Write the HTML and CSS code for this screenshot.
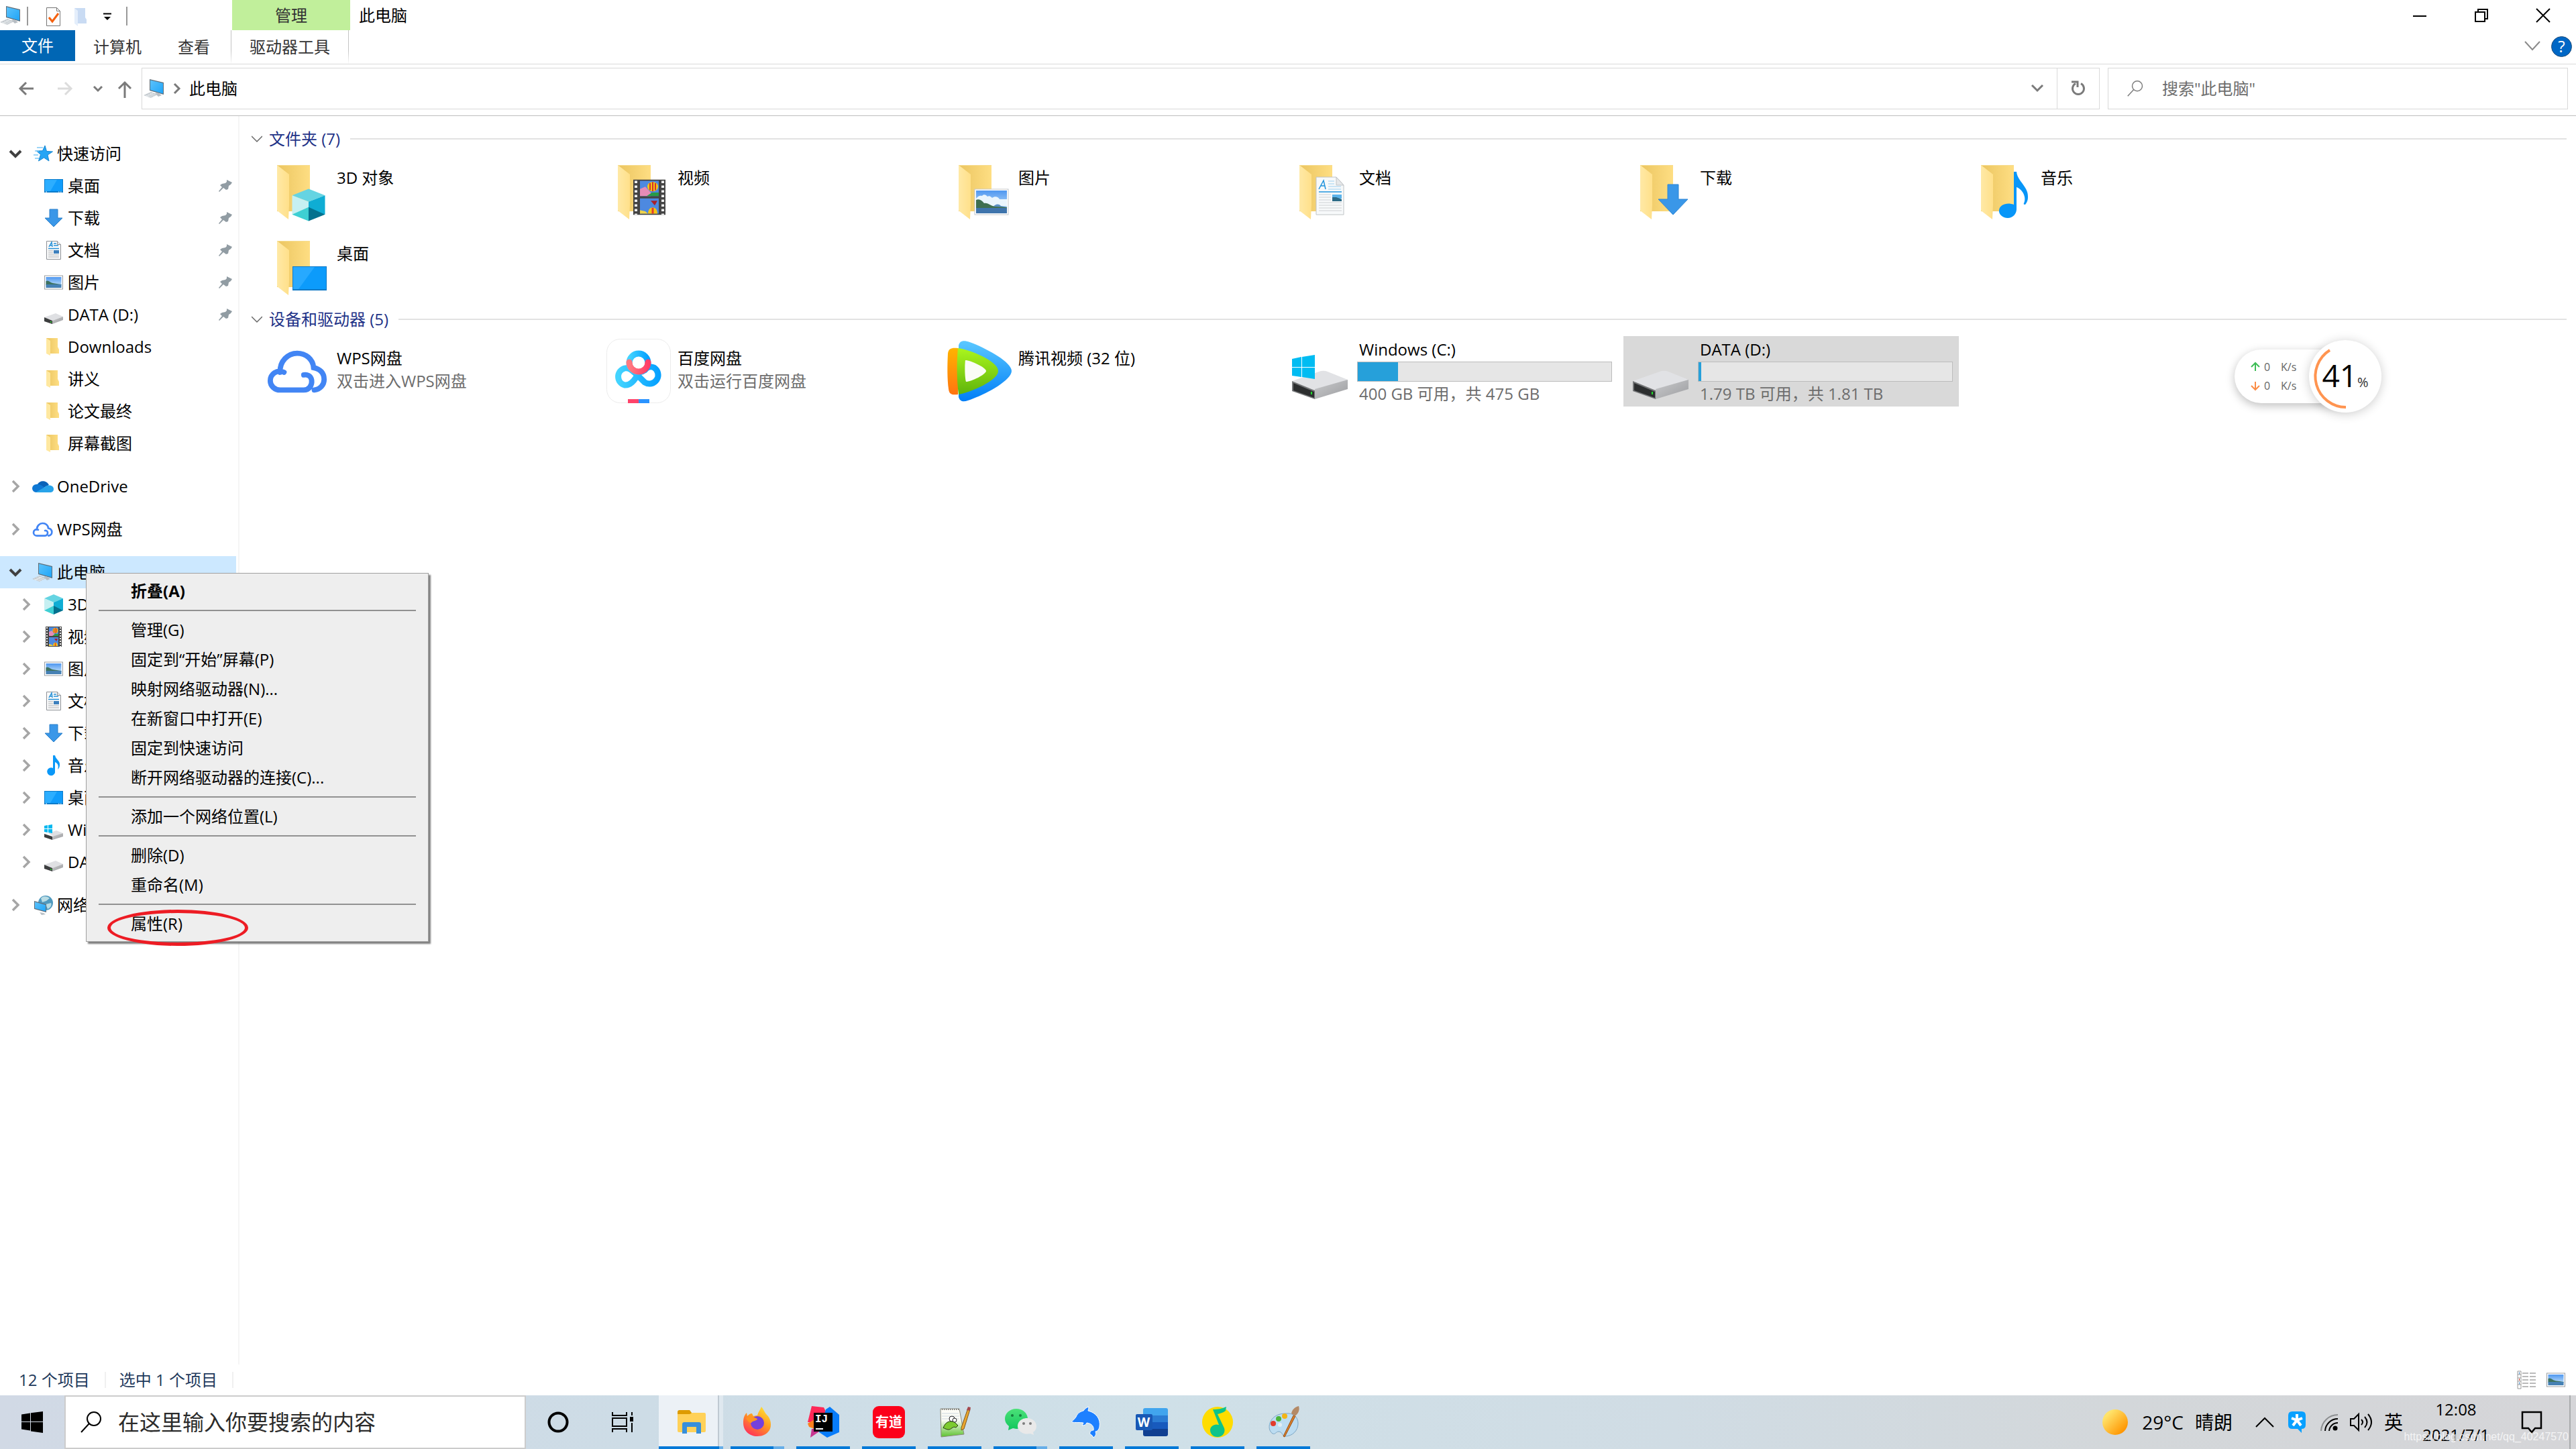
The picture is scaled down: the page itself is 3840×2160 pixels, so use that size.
FILE: index.html
```html
<!DOCTYPE html>
<html lang="zh-CN">
<head>
  <meta charset="utf-8">
  <title>此电脑</title>
  <link rel="stylesheet" href="styles.css">
</head>
<body>

<!-- shared icons -->
<svg class="defs" aria-hidden="true">
  <defs>
    <linearGradient id="g-back" x1="0" y1="0" x2="1" y2="0"><stop offset="0" stop-color="#ebc560"/><stop offset="1" stop-color="#fede83"/></linearGradient>
    <linearGradient id="g-front" x1="0" y1="0" x2="1" y2="0"><stop offset="0" stop-color="#ffe9a6"/><stop offset="1" stop-color="#ffe08a"/></linearGradient>
    <linearGradient id="g-screen" x1="0" y1="0" x2="1" y2="1"><stop offset="0" stop-color="#5cc2fb"/><stop offset="1" stop-color="#1fa5f8"/></linearGradient>
    <linearGradient id="g-sky" x1="0" y1="0" x2="0" y2="1"><stop offset="0" stop-color="#4f97f0"/><stop offset="1" stop-color="#d8effc"/></linearGradient>
    <linearGradient id="g-drive" x1="0" y1="0" x2="1" y2="1"><stop offset="0" stop-color="#c9cacc"/><stop offset="1" stop-color="#9c9da0"/></linearGradient>
    <linearGradient id="g-sun" x1="0" y1="0" x2="1" y2="1"><stop offset=".2" stop-color="#ffe36b"/><stop offset=".85" stop-color="#ff9500"/></linearGradient>
    <linearGradient id="g-tblue" x1="0" y1="0" x2="0" y2="1"><stop offset="0" stop-color="#5bc8ff"/><stop offset="1" stop-color="#007ef7"/></linearGradient>
    <linearGradient id="g-torange" x1="0" y1="0" x2="0" y2="1"><stop offset="0" stop-color="#ffb300"/><stop offset="1" stop-color="#ff7410"/></linearGradient>
    <linearGradient id="g-tgreen" x1="0" y1="0" x2="0" y2="1"><stop offset="0" stop-color="#aaf51e"/><stop offset="1" stop-color="#5fb40b"/></linearGradient>
    <linearGradient id="g-bd" x1="0" y1="0" x2="1" y2="0"><stop offset="0" stop-color="#43d4ff"/><stop offset="1" stop-color="#06a1ff"/></linearGradient>
    <linearGradient id="g-bdr" x1="0" y1="0" x2="1" y2="0"><stop offset="0" stop-color="#ff7a80"/><stop offset="1" stop-color="#ff3e68"/></linearGradient>
    <linearGradient id="g-fox" x1=".8" y1="0" x2=".2" y2="1"><stop offset="0" stop-color="#ffe53a"/><stop offset=".45" stop-color="#ff9a1f"/><stop offset="1" stop-color="#ff2a5f"/></linearGradient>
    <linearGradient id="g-note" x1="0" y1="0" x2="0" y2="1"><stop offset=".4" stop-color="#fcfcf6"/><stop offset="1" stop-color="#5cc22e"/></linearGradient>
    <linearGradient id="g-wechat" x1="0" y1="0" x2="0" y2="1"><stop offset="0" stop-color="#4be178"/><stop offset="1" stop-color="#12c65d"/></linearGradient>
  </defs>

  <symbol id="i-pc" viewBox="0 0 32 32">
    <path d="M9 2l21 5v18L9 19z" fill="#5f6d78"/>
    <path d="M10 3.500l19 4.500v15.500l-19-5.500z" fill="url(#g-screen)"/>
    <path d="M17 23l4-1 6 4-5 2z" fill="#b6bcc2"/>
    <path d="M0 26l11-5 10 4-10 5z" fill="#c3c9ce"/>
    <path d="M3 26l10 3M6 24.500l10 3M9 23l9 3M4 28l10-5" stroke="#eef1f3" stroke-width=".8"/>
  </symbol>
  <symbol id="i-star" viewBox="0 0 32 32">
    <path d="M19 4l2.500 8.500 9 .5-7.500 5 2 9-7.500-5-8 5 3-9.500-6-5.500 9-.2z" fill="#25a5f5" stroke="#1687d2"/>
    <path d="M7 7h9M4 12h6M2 18h7M4 23h6" stroke="#7cc8f5" stroke-width="1.500"/>
  </symbol>
  <symbol id="i-desktop" viewBox="0 0 32 32">
    <rect x="2" y="6" width="28" height="20" fill="#0b7bca"/>
    <path d="M3 7h26v17H3z" fill="#109cfb"/>
    <path d="M3 7h18L11 24H3z" fill="#2caeff"/>
    <path d="M4 25h2M23 25h1.500M26 25h1.500" stroke="#fff"/>
  </symbol>
  <symbol id="i-down" viewBox="0 0 32 32">
    <path d="M10 3h12v13h7L16 29 3 16h7z" fill="#3a97e8" stroke="#2c80c9"/>
  </symbol>
  <symbol id="i-doc" viewBox="0 0 32 32">
    <path d="M5.500 2.500h16l5 5v22h-21z" fill="#fafafa" stroke="#8e9297"/>
    <path d="M21.500 2.500v5h5" fill="#e4e6e8" stroke="#8e9297"/>
    <path d="M9 11l4-7 1 7M10 9h4M16 6h4M16 9h7" stroke="#2490d8" stroke-width="1.500" fill="none"/>
    <path d="M8 13.500h16" stroke="#2490d8" stroke-width="1.500"/>
    <path d="M8 17h7M8 20h7M8 23h16M8 26h16" stroke="#a9adb1"/>
    <rect x="16" y="16" width="8" height="5" fill="#3d80bd"/>
  </symbol>
  <symbol id="i-pic" viewBox="0 0 32 32">
    <rect x="2.500" y="6" width="27" height="20" fill="#fff" stroke="#9a9ea2"/>
    <rect x="4.500" y="8" width="23" height="16" fill="url(#g-sky)"/>
    <path d="M4.500 14c4-2 6 2 10 3s8 1 13 2v1h-23z" fill="#3e7260"/>
    <path d="M4.500 19h23v5h-23z" fill="#4681b4"/>
  </symbol>
  <symbol id="i-drive" viewBox="0 0 32 32">
    <path d="M2 20l17-6 11 5-16 6z" fill="#dfe0e3"/>
    <path d="M14 25l16-6v5l-16 6z" fill="url(#g-drive)"/>
    <path d="M2 20l12 5v5L2 26z" fill="#3c3e3f"/>
    <path d="M11 27h2" stroke="#2fe02f" stroke-width="1.500"/>
  </symbol>
  <symbol id="i-windrive" viewBox="0 0 32 32">
    <path d="M8 21l12-4 10 4-14 5z" fill="#dfe0e3"/>
    <path d="M14 26l16-5v5l-16 5z" fill="url(#g-drive)"/>
    <path d="M2 22l12 4v5L2 27z" fill="#3c3e3f"/>
    <path d="M2 10l5-1v5H2zM8 9l6-1v6H8zM2 15h5v5l-5-1zM8 15h6v6l-6-1z" fill="#00b8f0"/>
  </symbol>
  <symbol id="i-folder" viewBox="0 0 32 32">
    <path d="M5 3h17v13l2 4v6H5z" fill="url(#g-back)"/>
    <path d="M5 3l6 4v22l-6-3z" fill="#ffe8a0"/>
  </symbol>
  <symbol id="i-onedrive" viewBox="0 0 32 32">
    <path d="M8 13c2-5 12-8 17 1l-8 4z" fill="#0a62b8"/>
    <path d="M6 25a6 6 0 010-12c4-1 8 1 14 6l-9 6z" fill="#0f78d4"/>
    <path d="M5 25l14-8c3-4 13-3 13 3 0 4-3 5-5 5z" fill="#28a3e9"/>
  </symbol>
  <symbol id="i-wps" viewBox="0 0 96 70">
    <path d="M21 37c-1-17 12-29 26-29 13 0 24 9 25 22 10 2 16 8 16 18 0 8-6 15-15 16M27 37c-11-5-21 3-21 13 0 8 7 14 15 14h36c8 0 13-7 12-15-1-7-7-9-12-8" fill="none" stroke="#4285f4" stroke-width="8" stroke-linecap="round"/>
  </symbol>
  <symbol id="i-cube" viewBox="0 0 32 32">
    <path d="M16 1l14 6-14 6L2 7z" fill="#65d4e2"/>
    <path d="M2 7l14 6v12L2 25z" fill="#c6f0f2"/>
    <path d="M30 7l-14 6v12l14 0z" fill="#0fadd4"/>
    <path d="M2 25l14-7v13z" fill="#3ecfd3"/>
    <path d="M30 25l-14-7v13z" fill="#03718e"/>
  </symbol>
  <symbol id="i-film" viewBox="0 0 32 32">
    <rect x="4" y="1" width="24" height="30" fill="#444"/>
    <path d="M6 2v29M26 2v29" stroke="#eee" stroke-width="2" stroke-dasharray="2 2"/>
    <path d="M9 2h14v13H9zM9 17h14v13H9z" fill="#4d89e0"/>
    <path d="M9 9l4-2 4 5v3H9z" fill="#e58cb6"/>
    <path d="M14 15h9v-3h-5z" fill="#279b47"/>
    <circle cx="18.500" cy="7" r="4" fill="#f3c516"/>
    <path d="M18.500 3v8M16.500 4v6M20.500 4v6" stroke="#d5302a"/>
    <path d="M17 19h5l-2 4z" fill="#a7212a"/>
    <path d="M15 30c0-7 7-7 7 0z" fill="#f3c516"/>
    <path d="M18.500 25v5" stroke="#e33b2e" stroke-width="1.500"/>
    <path d="M9 30v-3l4 1 2 2z" fill="#f0d34a"/>
  </symbol>
  <symbol id="i-note" viewBox="0 0 32 32">
    <path d="M15 1h3c1 6 8 8 7 15-.4 3-1 4-3 6 2-6 0-9-4-11v13a6 6 0 11-3-4z" fill="#0a98f8"/>
  </symbol>
  <symbol id="i-net" viewBox="0 0 32 32">
    <circle cx="20" cy="13" r="11" fill="#4f99be"/>
    <path d="M13 6c4-4 9-3 13 0l-5 4-6 2zM20 15l8-2c2 4-2 8-5 9z" fill="#b9dce4"/>
    <path d="M3 10l18 5v12L3 22z" fill="#5f6d78"/>
    <path d="M4 11.500l16 4.500v9.500L4 21z" fill="url(#g-screen)"/>
    <path d="M11 27l6 1 3 2-6 1z" fill="#b9c0c6"/>
  </symbol>
  <symbol id="i-pin" viewBox="0 0 24 24">
    <path d="M14 3l8 4-2 3-3 2-1 5-3 1-4-3-6 6-1-1 5-6-3-3 3-2 5-1 2-2z" fill="#919ca3"/>
  </symbol>
  <symbol id="i-open" viewBox="0 0 32 32">
    <path d="M7 12l8 8 8-8" fill="none" stroke="#404040" stroke-width="4"/>
  </symbol>
  <symbol id="i-closed" viewBox="0 0 32 32">
    <path d="M11 8l8 8-8 8" fill="none" stroke="#a6a6a6" stroke-width="3.500"/>
  </symbol>
  <symbol id="i-group" viewBox="0 0 16 16">
    <path d="M0 4l8 8 8-8" fill="none" stroke="#666" stroke-width="1.500"/>
  </symbol>
  <symbol id="i-bigfolder" viewBox="0 0 96 96">
    <path d="M17 10h49v69H17z" fill="url(#g-back)"/>
    <path d="M17 10l18 14v45l-1 22-17-13z" fill="url(#g-front)"/>
    <path d="M17 10.500h49" stroke="#f6dc8f"/>
  </symbol>
  <symbol id="i-glass" viewBox="0 0 32 32">
    <circle cx="20" cy="11" r="10" fill="none" stroke="currentColor" stroke-width="2"/>
    <path d="M13 18L1 31" stroke="currentColor" stroke-width="2"/>
  </symbol>
</svg>

<header class="titlebar">
  <div class="quickbar">
    <svg class="ic32"><use href="#i-pc"/></svg>
    <i class="bar"></i>
    <button class="qbtn" aria-label="属性"><svg width="24" height="30" viewBox="0 0 24 30"><path d="M1.500 1.500h15l5 5v22h-20z" fill="#fcfcfc" stroke="#777"/><path d="M16.500 1.500v5h5" fill="none" stroke="#777"/><path d="M5 16l5 6 9-12" fill="none" stroke="#f4600f" stroke-width="3"/></svg></button>
    <button class="qbtn" aria-label="新建文件夹"><svg width="24" height="30" viewBox="0 0 24 30"><path d="M3 2h16v14l2 3v6H3z" fill="#c9dbf3"/><path d="M3 2l5 4v23l-5-4z" fill="#e4eefb"/></svg></button>
    <button class="qbtn" aria-label="自定义快速访问工具栏"><svg width="12" height="12" viewBox="0 0 12 12"><path d="M0 1.500h12" stroke="#000" stroke-width="2"/><path d="M1 6h10l-5 5z"/></svg></button>
    <i class="bar"></i>
  </div>
  <div class="tool-head">管理</div>
  <h1 class="title">此电脑</h1>
  <div class="winbtns">
    <button aria-label="最小化"><svg width="22" height="22"><path d="M1 12h20" stroke="#000" stroke-width="2"/></svg></button>
    <button aria-label="还原"><svg width="22" height="22"><path d="M2 6h14v14H2zM6 6V2h14v14h-4" fill="none" stroke="#000" stroke-width="2"/></svg></button>
    <button aria-label="关闭"><svg width="22" height="22"><path d="M1 1l20 20M21 1L1 21" stroke="#000" stroke-width="2"/></svg></button>
  </div>
</header>

<nav class="ribbon">
  <button class="tab file">文件</button>
  <button class="tab">计算机</button>
  <button class="tab">查看</button>
  <button class="tab tool">驱动器工具</button>
  <div class="ribbon-end">
    <button aria-label="展开功能区"><svg width="24" height="16"><path d="M1 1l11 12L23 1" fill="none" stroke="#8a8a8a" stroke-width="2"/></svg></button>
    <button class="help" aria-label="帮助">?</button>
  </div>
</nav>

<div class="address-row">
  <div class="navbtns">
    <button aria-label="后退"><svg width="24" height="24"><path d="M23 12H3M12 3l-9 9 9 9" fill="none" stroke="#7a7a7a" stroke-width="3"/></svg></button>
    <button aria-label="前进"><svg width="24" height="24"><path d="M1 12h20M12 3l9 9-9 9" fill="none" stroke="#dcdcdc" stroke-width="3"/></svg></button>
    <button class="slim" aria-label="最近浏览的位置"><svg width="14" height="14"><path d="M1 4l6 6 6-6" fill="none" stroke="#7a7a7a" stroke-width="3"/></svg></button>
    <button class="slim" aria-label="上移"><svg width="22" height="24"><path d="M11 26V3M2 12l9-9 9 9" fill="none" stroke="#7a7a7a" stroke-width="3"/></svg></button>
  </div>
  <div class="address">
    <svg class="ic32"><use href="#i-pc"/></svg>
    <svg width="12" height="16"><path d="M2 1l7 7-7 7" fill="none" stroke="#7a7a7a" stroke-width="3"/></svg>
    <a class="crumb" href="#">此电脑</a>
    <button class="addr-drop" aria-label="以前的位置"><svg width="20" height="14"><path d="M2 2l8 8 8-8" fill="none" stroke="#7a7a7a" stroke-width="3"/></svg></button>
    <button class="refresh" aria-label="刷新"><svg width="24" height="24"><path d="M16 4.500a8.500 8.500 0 11-8 0" fill="none" stroke="#7a7a7a" stroke-width="3"/><path d="M2 2h9v8" fill="none" stroke="#7a7a7a" stroke-width="3"/></svg></button>
  </div>
  <label class="find">
    <svg width="24" height="24"><use href="#i-glass"/></svg>
    <input type="search" placeholder='搜索"此电脑"' aria-label="搜索此电脑">
  </label>
</div>

<div class="middle">
  <aside class="tree">
    <ul>
      <li class="row"><svg class="ic32"><use href="#i-open"/></svg><svg class="ic32 icon"><use href="#i-star"/></svg>快速访问</li>
      <li class="row kid"><svg class="ic32"></svg><svg class="ic32 icon"><use href="#i-desktop"/></svg>桌面<svg class="pin"><use href="#i-pin"/></svg></li>
      <li class="row kid"><svg class="ic32"></svg><svg class="ic32 icon"><use href="#i-down"/></svg>下载<svg class="pin"><use href="#i-pin"/></svg></li>
      <li class="row kid"><svg class="ic32"></svg><svg class="ic32 icon"><use href="#i-doc"/></svg>文档<svg class="pin"><use href="#i-pin"/></svg></li>
      <li class="row kid"><svg class="ic32"></svg><svg class="ic32 icon"><use href="#i-pic"/></svg>图片<svg class="pin"><use href="#i-pin"/></svg></li>
      <li class="row kid"><svg class="ic32"></svg><svg class="ic32 icon"><use href="#i-drive"/></svg>DATA (D:)<svg class="pin"><use href="#i-pin"/></svg></li>
      <li class="row kid"><svg class="ic32"></svg><svg class="ic32 icon"><use href="#i-folder"/></svg>Downloads</li>
      <li class="row kid"><svg class="ic32"></svg><svg class="ic32 icon"><use href="#i-folder"/></svg>讲义</li>
      <li class="row kid"><svg class="ic32"></svg><svg class="ic32 icon"><use href="#i-folder"/></svg>论文最终</li>
      <li class="row kid"><svg class="ic32"></svg><svg class="ic32 icon"><use href="#i-folder"/></svg>屏幕截图</li>
    </ul>
    <ul>
      <li class="row"><svg class="ic32"><use href="#i-closed"/></svg><svg class="ic32 icon"><use href="#i-onedrive"/></svg>OneDrive</li>
    </ul>
    <ul>
      <li class="row"><svg class="ic32"><use href="#i-closed"/></svg><svg class="ic32 icon"><use href="#i-wps"/></svg>WPS网盘</li>
    </ul>
    <ul>
      <li class="row picked"><svg class="ic32"><use href="#i-open"/></svg><svg class="ic32 icon"><use href="#i-pc"/></svg>此电脑
        <!-- right click menu -->
        <div class="menu" role="menu">
          <button class="strong" role="menuitem">折叠(A)</button>
          <hr>
          <button role="menuitem">管理(G)</button>
          <button role="menuitem">固定到“开始”屏幕(P)</button>
          <button role="menuitem">映射网络驱动器(N)...</button>
          <button role="menuitem">在新窗口中打开(E)</button>
          <button role="menuitem">固定到快速访问</button>
          <button role="menuitem">断开网络驱动器的连接(C)...</button>
          <hr>
          <button role="menuitem">添加一个网络位置(L)</button>
          <hr>
          <button role="menuitem">删除(D)</button>
          <button role="menuitem">重命名(M)</button>
          <hr>
          <button role="menuitem">属性(R)</button>
          <i class="ring"></i>
        </div>
      </li>
      <li class="row kid"><svg class="ic32"><use href="#i-closed"/></svg><svg class="ic32 icon"><use href="#i-cube"/></svg>3D 对象</li>
      <li class="row kid"><svg class="ic32"><use href="#i-closed"/></svg><svg class="ic32 icon"><use href="#i-film"/></svg>视频</li>
      <li class="row kid"><svg class="ic32"><use href="#i-closed"/></svg><svg class="ic32 icon"><use href="#i-pic"/></svg>图片</li>
      <li class="row kid"><svg class="ic32"><use href="#i-closed"/></svg><svg class="ic32 icon"><use href="#i-doc"/></svg>文档</li>
      <li class="row kid"><svg class="ic32"><use href="#i-closed"/></svg><svg class="ic32 icon"><use href="#i-down"/></svg>下载</li>
      <li class="row kid"><svg class="ic32"><use href="#i-closed"/></svg><svg class="ic32 icon"><use href="#i-note"/></svg>音乐</li>
      <li class="row kid"><svg class="ic32"><use href="#i-closed"/></svg><svg class="ic32 icon"><use href="#i-desktop"/></svg>桌面</li>
      <li class="row kid"><svg class="ic32"><use href="#i-closed"/></svg><svg class="ic32 icon"><use href="#i-windrive"/></svg>Windows (C:)</li>
      <li class="row kid"><svg class="ic32"><use href="#i-closed"/></svg><svg class="ic32 icon"><use href="#i-drive"/></svg>DATA (D:)</li>
    </ul>
    <ul>
      <li class="row"><svg class="ic32"><use href="#i-closed"/></svg><svg class="ic32 icon"><use href="#i-net"/></svg>网络</li>
    </ul>
  </aside>

  <main class="content">
    <h2 class="group"><svg width="16" height="16"><use href="#i-group"/></svg>文件夹 (7)</h2>
    <div class="tiles">
      <div class="tile"><svg class="pic" viewBox="0 0 96 96"><use href="#i-bigfolder"/><svg x="36" y="44" width="56" height="51" preserveAspectRatio="none" viewBox="0 0 32 32"><use href="#i-cube" width="32" height="32"/></svg></svg><div class="text"><p>3D 对象</p></div></div>
      <div class="tile"><svg class="pic" viewBox="0 0 96 96"><use href="#i-bigfolder"/><svg x="32" y="30" width="64" height="56" preserveAspectRatio="none" viewBox="0 0 32 32"><use href="#i-film" width="32" height="32"/></svg></svg><div class="text"><p>视频</p></div></div>
      <div class="tile">
        <svg class="pic" viewBox="0 0 96 96"><use href="#i-bigfolder"/>
          <rect x="41" y="46" width="50" height="38" fill="#fff" stroke="#c4c7ca"/>
          <rect x="43" y="48" width="46" height="34" fill="url(#g-sky)"/>
          <path d="M43 60c3-4 6-5 9-4 2-3 6-2 8 1 3-2 5 0 7 2 4-3 9-2 11 2h11v10H43z" fill="#eaf5fd"/>
          <path d="M68 73c3-5 9-6 12-2l9 2z" fill="#5a90c4"/>
          <path d="M43 62c5-2 9 1 12 5 5-2 11 5 18 5l16 1v1H43z" fill="#3f6f50"/>
          <path d="M43 74h46v8H43z" fill="#3f74ac"/>
        </svg><div class="text"><p>图片</p></div></div>
      <div class="tile">
        <svg class="pic" viewBox="0 0 96 96"><use href="#i-bigfolder"/>
          <path d="M42 28h30l11 12v44H42z" fill="#f7f9fa" stroke="#bfc3c6"/>
          <path d="M72 28v12h11z" fill="#e6e8ea" stroke="#bfc3c6"/>
          <path d="M46 46l7-13 3 13M49 41h6" fill="none" stroke="#1f93dc" stroke-width="1.500"/>
          <path d="M60 34h9M60 38h9M60 42h19M60 46h19" stroke="#9cd0f0"/>
          <path d="M46 50h34" stroke="#1f93dc" stroke-width="1.500"/>
          <path d="M46 54h18M46 58h18M46 62h18M46 66h34M46 70h34M46 74h34M46 78h34" stroke="#cdd0d3"/>
          <path d="M66 54h14v6H66z" fill="#5bb3ea"/><path d="M66 58l6 0 8 3v3H66z" fill="#2c6a86"/>
        </svg><div class="text"><p>文档</p></div></div>
      <div class="tile"><svg class="pic" viewBox="0 0 96 96"><use href="#i-bigfolder"/><path d="M58 39h16v22h14L66 84 44 61h14z" fill="#3a97e8" stroke="#2d86d6"/></svg><div class="text"><p>下载</p></div></div>
      <div class="tile"><svg class="pic" viewBox="0 0 96 96"><use href="#i-bigfolder"/><path d="M66 20h4c1 14 18 22 17 38 0 4-1 7-4 11-2 0-3-1-2-2 4-8-1-20-11-24v33c0 7-6 13-13 13-8 0-14-6-13-12 1-8 12-12 22-8z" fill="#0896f8"/></svg><div class="text"><p>音乐</p></div></div>
      <div class="tile"><svg class="pic" viewBox="0 0 96 96"><use href="#i-bigfolder"/><path d="M40 48h51v36H40z" fill="#0f79c6"/><path d="M41 49h49v33H41z" fill="#0c9bfb"/><path d="M41 49h32L49 82h-8z" fill="#27a9ff"/></svg><div class="text"><p>桌面</p></div></div>
    </div>

    <h2 class="group"><svg width="16" height="16"><use href="#i-group"/></svg>设备和驱动器 (5)</h2>
    <div class="tiles">
      <div class="tile"><svg class="pic" viewBox="0 0 96 96"><use href="#i-wps" x="1" y="12" width="94" height="72"/></svg><div class="text"><p>WPS网盘</p><p class="sub">双击进入WPS网盘</p></div></div>
      <div class="tile">
        <svg class="pic" viewBox="0 0 96 96">
          <rect x=".5" y=".5" width="95" height="95" rx="20" fill="#fff" stroke="#ececec"/>
          <path d="M48 50C42 64 34 70 27 69a13 13 0 010-25c8-2 14 6 21 12l9 9a13 13 0 1014-22c-6-3-12 1-15 5" fill="none" stroke="url(#g-bd)" stroke-width="9"/>
          <circle cx="48" cy="36" r="14" fill="#fff" stroke="url(#g-bd)" stroke-width="9"/>
          <path d="M34 35a14 14 0 0028 0" fill="none" stroke="url(#g-bdr)" stroke-width="9" stroke-linecap="round"/>
          <path d="M32 90h16v6H32z" fill="#ff436a"/><path d="M48 90h16v6H48z" fill="#2a93ff"/>
        </svg><div class="text"><p>百度网盘</p><p class="sub">双击运行百度网盘</p></div></div>
      <div class="tile">
        <svg class="pic" viewBox="0 0 96 96">
          <path d="M1 22c1-8 6-9 15-8v69c-9 1-13 0-14-8C0 60 0 40 1 22z" fill="url(#g-torange)"/>
          <path d="M17 10c2-9 10-8 22-3 22 9 57 28 57 41S61 81 39 89c-12 5-19 7-22-2z" fill="url(#g-tblue)"/>
          <path d="M16 14c19 2 60 20 60 34S35 80 17 83c-3-20-3-50-1-69z" fill="url(#g-tgreen)"/>
          <path d="M27 32c8 0 31 11 31 16S36 64 28 64c-2-6-2-26-1-32z" fill="#fafcf5"/>
        </svg><div class="text"><p>腾讯视频 (32 位)</p></div></div>
      <div class="tile drive">
        <svg class="pic" viewBox="0 0 96 96">
          <path d="M6 63l43-15q6-1 10 1l30 12-49 16z" fill="#e1e2e5"/><path d="M40 75l49-14v14L40 90z" fill="url(#g-drive)"/>
          <path d="M6 63l34 14v13L6 78z" fill="#747678"/><path d="M8 66l31 13v9L8 77z" fill="#2c2e2f"/><path d="M35 79v4" stroke="#1fdc2a" stroke-width="2"/>
          <path d="M6 30l14-3v15H6zM21 27l19-3v18H21zM6 43h14v14l-14-2zM21 43h19v17l-19-3z" fill="#00bcf2"/>
        </svg><div class="text"><p>Windows (C:)</p><div class="usage"><span style="width:16%"></span></div><p class="sub">400 GB 可用，共 475 GB</p></div></div>
      <div class="tile drive chosen">
        <svg class="pic" viewBox="0 0 96 96">
          <path d="M6 63l43-15q6-1 10 1l30 12-49 16z" fill="#e1e2e5"/><path d="M40 75l49-14v14L40 90z" fill="url(#g-drive)"/>
          <path d="M6 63l34 14v13L6 78z" fill="#747678"/><path d="M8 66l31 13v9L8 77z" fill="#2c2e2f"/><path d="M35 79v4" stroke="#1fdc2a" stroke-width="2"/>
        </svg><div class="text"><p>DATA (D:)</p><div class="usage"><span style="width:1%"></span></div><p class="sub">1.79 TB 可用，共 1.81 TB</p></div></div>
    </div>
  </main>

  <!-- floating speed ball -->
  <div class="ball">
    <div class="speeds">
      <p><svg width="16" height="14"><path d="M8 13V2M2 7l6-6 6 6" fill="none" stroke="#3dbd55" stroke-width="2"/></svg><span>0</span>K/s</p>
      <p><svg width="16" height="14"><path d="M8 1v11M2 7l6 6 6-6" fill="none" stroke="#fb8c45" stroke-width="2"/></svg><span>0</span>K/s</p>
    </div>
    <div class="percent">
      <svg class="arc" viewBox="0 0 108 108"><path d="M31 15A46 46 0 0055 100" fill="none" stroke="#ff9450" stroke-width="4"/></svg>
      <b>41</b><small>%</small>
    </div>
  </div>
</div>

<footer class="status">
  <span>12 个项目</span>
  <span>选中 1 个项目</span>
  <div class="views">
    <button aria-label="详细信息"><svg width="30" height="28"><path d="M1 1h5v26H1zM1 6h5M1 11h5M1 16h5M1 21h5" fill="#fff" stroke="#999"/><path d="M8 4h9M19 4h9M8 9h9M19 9h9M8 14h9M19 14h9M8 19h9M19 19h9M8 24h9M19 24h9" stroke="#777"/><path d="M3.500 2.500v3M3.500 17.500v3" stroke="#3c82c4"/><path d="M3.500 12v3" stroke="#d03a2a"/></svg></button>
    <button aria-label="大图标"><svg width="32" height="32"><use href="#i-pic"/></svg></button>
  </div>
</footer>

<div class="taskbar">
  <button class="start" aria-label="开始"><svg width="32" height="32"><path d="M0 4.500l13-2V15H0zM14 2.300L32 0v15H14zM0 16h13v12.500l-13-2zM14 16h18v16l-18-2.500z"/></svg></button>
  <label class="search">
    <svg width="32" height="32"><use href="#i-glass"/></svg>
    <input type="search" placeholder="在这里输入你要搜索的内容" aria-label="搜索">
  </label>
  <button class="start" aria-label="Cortana"><svg width="32" height="32"><circle cx="16" cy="16" r="13.500" fill="none" stroke="#000" stroke-width="4"/></svg></button>
  <button class="start" aria-label="任务视图"><svg width="34" height="32"><path d="M2 1v5h21V1M2 31v-5h21v5M2 10h21v12H2zM31 1v5M31 17v14" fill="none" stroke="#000" stroke-width="2"/><path d="M28 8h5v7h-5z"/></svg></button>

  <div class="apps">
    <button class="app front" aria-label="文件资源管理器"><svg viewBox="0 0 48 48"><path d="M3 9q0-3 3-3h15l3 4v4H3z" fill="#dd9b00"/><path d="M3 12h18l4-2h18q2 0 2 2v25q0 2-2 2H5q-2 0-2-2z" fill="#ffd159"/><path d="M10 27q0-3 3-3h22q3 0 3 3v14h-7v-10H17v10h-7z" fill="#378fdb"/></svg></button>
    <button class="app many" aria-label="Firefox"><svg viewBox="0 0 48 48"><path d="M30 1c4 5 5 9 8 12 6 5 8 16 4 23-4 6-10 9-18 9C12 45 3 37 3 25c0-6 1-11 5-15l1 5c2-2 4-4 7-4l2 4c3-1 5-1 6-1 1-5 4-8 6-13z" fill="url(#g-fox)"/><circle cx="24" cy="25" r="10" fill="#7440dc"/><path d="M7 18c6-4 11-2 17 1-1 4-7 2-9 6-3 0-5-2-8-7z" fill="#ff9320"/></svg></button>
    <button class="app" aria-label="IntelliJ IDEA"><svg viewBox="0 0 48 48"><path d="M7 0l18 2 4 8v14H1z" fill="#fe2857"/><path d="M1 26l10-6v14l-8-3z" fill="#fc801d"/><path d="M28 5l6-4 14 12v26l-18 8-12-8z" fill="#087cfa"/><path d="M7 34h17L5 47z" fill="#c6358f"/><path d="M10 10h28v28H10z"/><text x="12" y="24" class="t-ij">IJ</text><path d="M13 34h11" stroke="#fff" stroke-width="2"/></svg></button>
    <button class="app" aria-label="有道词典"><svg viewBox="0 0 48 48"><rect width="48" height="48" rx="9" fill="#fc011a"/><text x="24" y="31" class="t-yd">有道</text></svg></button>
    <button class="app" aria-label="Notepad++"><svg viewBox="0 0 48 48"><path d="M3 4h28l7 38-34 4z" fill="url(#g-note)" stroke="#8b8b7e"/><path d="M5 5h26" stroke="#555" stroke-width="2" stroke-dasharray="1 2"/><path d="M5 11h25M5 15h26M5 19h26" stroke="#cdd8e0"/><path d="M7 33c3-10 10-11 16-10l6 6-3 3c-5-3-7 4-12 3s-6-3-7-2z" fill="#7cca2f" stroke="#253b10"/><circle cx="20" cy="19" r="4" fill="#fff" stroke="#222"/><circle cx="24" cy="21" r="3" fill="#fff" stroke="#222"/><path d="M44 3l3 2-9 29-4 2v-4z" fill="#e9a52e" stroke="#7e5a1e"/><path d="M44 1l4 1-1 5-5-1z" fill="#a5484c"/></svg></button>
    <button class="app many" aria-label="微信"><svg viewBox="0 0 48 48"><path d="M18 4c10 0 17 7 17 15s-7 15-17 15l-5-1-7 3 1-6c-4-3-6-7-6-11C1 11 8 4 18 4z" fill="url(#g-wechat)"/><circle cx="12" cy="14" r="2" fill="#167e3e"/><circle cx="24" cy="14" r="2" fill="#167e3e"/><path d="M34 18c8 0 14 5 14 12 0 4-2 7-5 9l1 4-5-2c-10 2-19-3-19-11 0-7 6-12 14-12z" fill="#e9e9e9"/><circle cx="29" cy="26" r="2" fill="#7d7d7d"/><circle cx="39" cy="26" r="2" fill="#7d7d7d"/></svg></button>
    <button class="app" aria-label="海豚"><svg viewBox="0 0 48 48"><path d="M28 1c0 3-1 5-1 6 12 3 19 12 17 24-1 4-3 7-6 7 1 3 1 6-3 9-1-2-2-4-5-5-1-3 1-6 5-6 1-5-2-10-10-11-1 3-4 4-7 4l2-4c-6-1-13 0-17-1-1-2 4-4 6-8C12 9 17 8 20 7c2-3 5-5 8-6z" fill="#1e80ff" stroke="#fff"/></svg></button>
    <button class="app" aria-label="Word"><svg viewBox="0 0 48 48"><path d="M11 6q0-3 3-3h31q3 0 3 3v8H11z" fill="#41a5ee"/><path d="M11 14h37v10H11z" fill="#2b7cd3"/><path d="M11 24h37v10H11z" fill="#185abd"/><path d="M11 34h37v8q0 3-3 3H14q-3 0-3-3z" fill="#103f91"/><rect y="12" width="25" height="24" rx="2" fill="#1858b5"/><text x="12" y="31" class="t-w">W</text></svg></button>
    <button class="app" aria-label="QQ音乐"><svg viewBox="0 0 48 48"><circle cx="24" cy="24" r="23" fill="#ffdc00"/><path d="M17 5c8 0 13-1 20-4l-1 6c-4 3-8 4-12 5l10 21c2 6-2 13-10 13-7 0-11-5-11-10 0-6 6-10 13-8z" fill="#0ec38b"/></svg></button>
    <button class="app" aria-label="画图"><svg viewBox="0 0 48 48"><path d="M28 11c12-1 18 6 18 15 0 11-9 19-19 19-5 0-4-7-10-7-4 0-5 5-9 3-6-4-6-12-3-18C9 15 17 11 28 11z" fill="#bcdcf1" stroke="#7da6c4"/><circle cx="9" cy="26" r="4" fill="#e23c2c"/><circle cx="17" cy="19" r="4" fill="#4db53a"/><circle cx="26" cy="15" r="4" fill="#f4b416"/><circle cx="19" cy="28" r="3" fill="#e2edf3"/><path d="M39 14l3 1-16 31-2-1z" fill="#d97f2c" stroke="#995115"/><path d="M36 11c1-5 4-9 11-11 2 6-1 12-6 15z" fill="#b48a66"/></svg></button>
  </div>

  <div class="tray">
    <button class="weather"><svg width="40" height="40"><circle cx="20" cy="20" r="19" fill="url(#g-sun)"/></svg><span>29°C</span><span>晴朗</span></button>
    <button class="ticon" aria-label="显示隐藏的图标"><svg width="28" height="16"><path d="M1 15L14 2l13 13" fill="none" stroke="#000" stroke-width="2"/></svg></button>
    <button class="ticon" aria-label="输入法"><svg width="28" height="34"><path d="M7 1h14q6 0 6 6v14q0 6-6 6v6l-6-6H7q-6 0-6-6V7q0-6 6-6z" fill="#08a0ff"/><path d="M14 5v9M6 11l8 3 8-3M14 14l-6 8M14 14l6 8" stroke="#fff" stroke-width="4"/></svg></button>
    <button class="ticon" aria-label="网络"><svg width="26" height="26"><path d="M1 26A25 25 0 0126 2" fill="none" stroke="#8c8e90" stroke-width="2"/><path d="M7 26A19 19 0 0126 8M13 26a13 13 0 0113-12" fill="none" stroke="#000" stroke-width="2"/><circle cx="22" cy="22" r="3.500"/></svg></button>
    <button class="ticon" aria-label="音量"><svg width="34" height="28"><path d="M1 9h5l7-7v24l-7-7H1zM17 10q4 4 0 8M22 6q7 8 0 16M27 2q10 12 0 24" fill="none" stroke="#000" stroke-width="2"/></svg></button>
    <button class="ticon ime">英</button>
    <button class="clock"><span>12:08</span><span>2021/7/1</span></button>
    <button class="notify" aria-label="通知"><svg width="32" height="34"><path d="M2 2h28v24h-9l-5 6-5-6H2z" fill="none" stroke="#000" stroke-width="2.500"/></svg></button>
    <i class="peek"></i>
  </div>
  <span class="mark">https://blog.csdn.net/qq_40247570</span>
</div>

</body>
</html>
```

FILE: styles.css
```css
* {box-sizing: border-box}
body {
  margin: 0;
  min-height: 100vh;
  display: flex;
  flex-direction: column;
  background: #fff;
  color: #000;
  font: 24px/34px "Open Sans", "Noto Sans CJK SC", sans-serif
}
button, input {font: inherit; color: inherit; border: 0; background: none; padding: 0; margin: 0; outline: 0}
button {display: flex; align-items: center; justify-content: center; white-space: nowrap}
ul {list-style: none; margin: 0; padding: 0}
p, h1, h2 {margin: 0; font-size: 24px; font-weight: 400}
svg {flex: none; display: block; overflow: visible}
.defs {position: absolute; width: 0; height: 0}
.ic32 {width: 32px; height: 32px}

/* title bar */
.titlebar {display: flex; height: 45px; align-items: center}
.quickbar {display: flex; align-items: center; width: 346px}
.bar {width: 2px; height: 28px; background: #999; margin: 2px 8px 0}
.qbtn {width: 40px; height: 40px; margin-top: 4px}
.bar + .qbtn {margin-left: 10px}
.tool-head {width: 176px; height: 45px; line-height: 45px; text-align: center; background: #c1ef9b; color: #333}
.title {padding-left: 13px; line-height: 45px}
.winbtns {display: flex; margin-left: auto; padding-right: 3px}
.winbtns button {width: 92px; height: 42px}

/* ribbon */
.ribbon {display: flex; height: 51px; border-bottom: 1px solid #dadada; color: #333}
.tab {padding: 0 27px; height: 50px}
.tab.file {padding: 0 32px; height: 46px; background: #0066b4; color: #fff}
.tab.tool {margin-left: 4px; width: 176px; border: solid; border-width: 0 1px; border-image: linear-gradient(#c4c4c4 60%, #fff) 1}
.ribbon-end {display: flex; align-items: center; gap: 16px; margin-left: auto; padding-right: 6px; height: 48px}
.help {width: 31px; height: 31px; border-radius: 50%; background: #0067c5; border: 1px solid #24507a; color: #fff; line-height: 28px}

/* address */
.address-row {display: flex; height: 77px; padding: 5px 12px 9px 0; border-bottom: 1px solid #bdbdbd}
.navbtns {display: flex; align-items: center; width: 211px; padding-left: 10px}
.navbtns button {width: 58px; height: 58px}
.navbtns .slim {width: 40px}
.address {flex: 1; display: flex; align-items: center; gap: 12px; border: 1px solid #d9d9d9; padding-left: 2px}
.crumb {color: #000; text-decoration: none}
.addr-drop {margin-left: auto; width: 34px; height: 60px}
.refresh {width: 63px; height: 60px; border-left: 1px solid #d9d9d9}
.find {display: flex; align-items: center; gap: 28px; width: 686px; margin-left: 12px; padding: 0 28px; border: 1px solid #d9d9d9; color: #7d7d7d}
.find input {flex: 1; min-width: 0}
.find input::placeholder {color: #6d6d6d; opacity: 1}

/* tree */
.middle {flex: 1; display: flex; position: relative}
.tree {width: 357px; border-right: 2px solid #f5f5f5; padding: 32px 3px 0 0}
.tree ul {margin-bottom: 16px}
.row {display: flex; align-items: center; position: relative; height: 48px; padding-left: 8px; white-space: nowrap}
.row.kid {padding-left: 24px}
.row .icon {margin: 0 5px 0 8px}
.picked {background: #cce8ff}
.pin {width: 24px; height: 24px; margin: 0 4px 0 auto}

/* context menu */
.menu {
  position: absolute;
  z-index: 5;
  left: 128px;
  top: 25px;
  width: 511px;
  padding: 4px 0 4px;
  background: #eee;
  border: 1px solid #a0a0a0;
  box-shadow: 3px 3px 2px rgba(0, 0, 0, .5)
}
.menu button {width: 100%; height: 44px; justify-content: flex-start; padding-left: 66px}
.menu .strong {font-weight: 700}
.menu hr {height: 2px; border: 0; background: #919191; margin: 6px 18px 6px}
.ring {position: absolute; left: 31px; bottom: -7px; width: 210px; height: 54px; border: 5px solid #ed1c24; border-radius: 50%}

/* tiles */
.content {flex: 1; padding: 17px 14px 0 18px}
.group {display: flex; align-items: center; gap: 10px; height: 34px; color: #1e3287}
.group::after {content: ""; flex: 1; height: 2px; background: #e2e2e2; margin-left: 5px}
.tiles {display: grid; grid-template-columns: repeat(auto-fill, 500px); gap: 8px; padding: 8px 0 9px 13px}
.tile {display: flex; height: 105px; padding: 4px 9px 0 8px}
.pic {width: 96px; height: 96px}
.text {flex: 1; padding: 12px 0 0 10px}
.drive .text {padding-top: 0}
.drive p {line-height: 32px}
.sub {color: #6d6d6d}
.chosen {background: #d9d9d9}
.usage {height: 30px; margin: 2px 0 2px -3px; border: 1px solid #bcbcbc; background: #e6e6e6}
.usage span {display: block; height: 100%; background: #26a0da}

/* speed ball */
.ball {position: absolute; right: 290px; top: 334px; display: flex; align-items: center}
.speeds {width: 165px; height: 80px; padding: 12px 0 0 23px; margin-right: -54px; border-radius: 40px 0 0 40px; background: #fff; box-shadow: 0 4px 14px rgba(0, 0, 0, .25); font-size: 16px; line-height: 28px; color: #666}
.speeds p {display: flex; align-items: center; font-size: 16px}
.speeds span {width: 20px; margin: 0 5px}
.percent {position: relative; display: flex; align-items: baseline; justify-content: center; width: 108px; height: 108px; border-radius: 50%; background: #fff; box-shadow: 0 2px 16px rgba(0, 0, 0, .2); line-height: 104px}
.percent b {font-size: 46px; font-weight: 400}
.percent small {font-size: 20px; color: #333}
.arc {position: absolute; inset: 0}

/* status bar */
.status {display: flex; align-items: center; height: 46px; padding-left: 6px; color: #1e395b}
.status span {padding: 0 22px; line-height: 24px; border-right: 2px solid #f0f0f0}
.status span + span {padding-left: 20px}
.views {display: flex; align-items: center; gap: 12px; margin-left: auto; padding-right: 14px}

/* taskbar */
.taskbar {position: relative; display: flex; height: 80px; background: linear-gradient(90deg, #d1d9e5, #cddce6 25%, #cfe0e8 45%, #d0dce4 65%, #d3d7da 82%, #d5d5d8)}
.start {width: 96px}
.search {display: flex; align-items: center; gap: 24px; width: 688px; padding-left: 22px; background: #fff; border: 2px solid #ccc}
.search input {flex: 1; min-width: 0; font-size: 32px; line-height: 48px}
.search input::placeholder {color: #2b2b2b; opacity: 1}
.apps {display: flex; padding-left: 6px}
.app {position: relative; width: 98px}
.app svg {width: 48px; height: 48px}
.app::after {content: ""; position: absolute; left: 9px; right: 9px; bottom: 0; height: 4px; background: #0078d7}
.app.many::after {background: linear-gradient(90deg, #0078d7 80%, #66aee8 80%)}
.app.front {background: linear-gradient(90deg, #ecf1f6 88px, #bfc9d2 88px, #bfc9d2 90px, #dfe8ef 90px, #dfe8ef 96px, transparent 96px)}
.app.front::after {left: 0; right: 2px; background: linear-gradient(90deg, #0078d7 90px, #66aee8 90px)}
.t-ij {font: 700 16px "Liberation Mono", monospace; fill: #fff}
.t-yd {font: 700 20px "Noto Sans CJK SC", sans-serif; fill: #fff; text-anchor: middle}
.t-w {font: 700 19px "Open Sans", sans-serif; fill: #fff; text-anchor: middle}

.tray {display: flex; margin-left: auto}
.weather {gap: 20px; padding-right: 24px; font-size: 28px}
.weather span + span {margin-left: -3px}
.ticon {width: 48px}
.ime {font-size: 28px}
.clock {width: 138px; flex-direction: column; line-height: 38px}
.notify {width: 88px}
.peek {width: 10px; margin-left: 12px; border-left: 2px solid #a9abad}
.mark {position: absolute; right: 11px; bottom: 6px; font: 16px/24px "Liberation Sans", Arial, sans-serif; color: rgba(255, 255, 255, .75)}
```
